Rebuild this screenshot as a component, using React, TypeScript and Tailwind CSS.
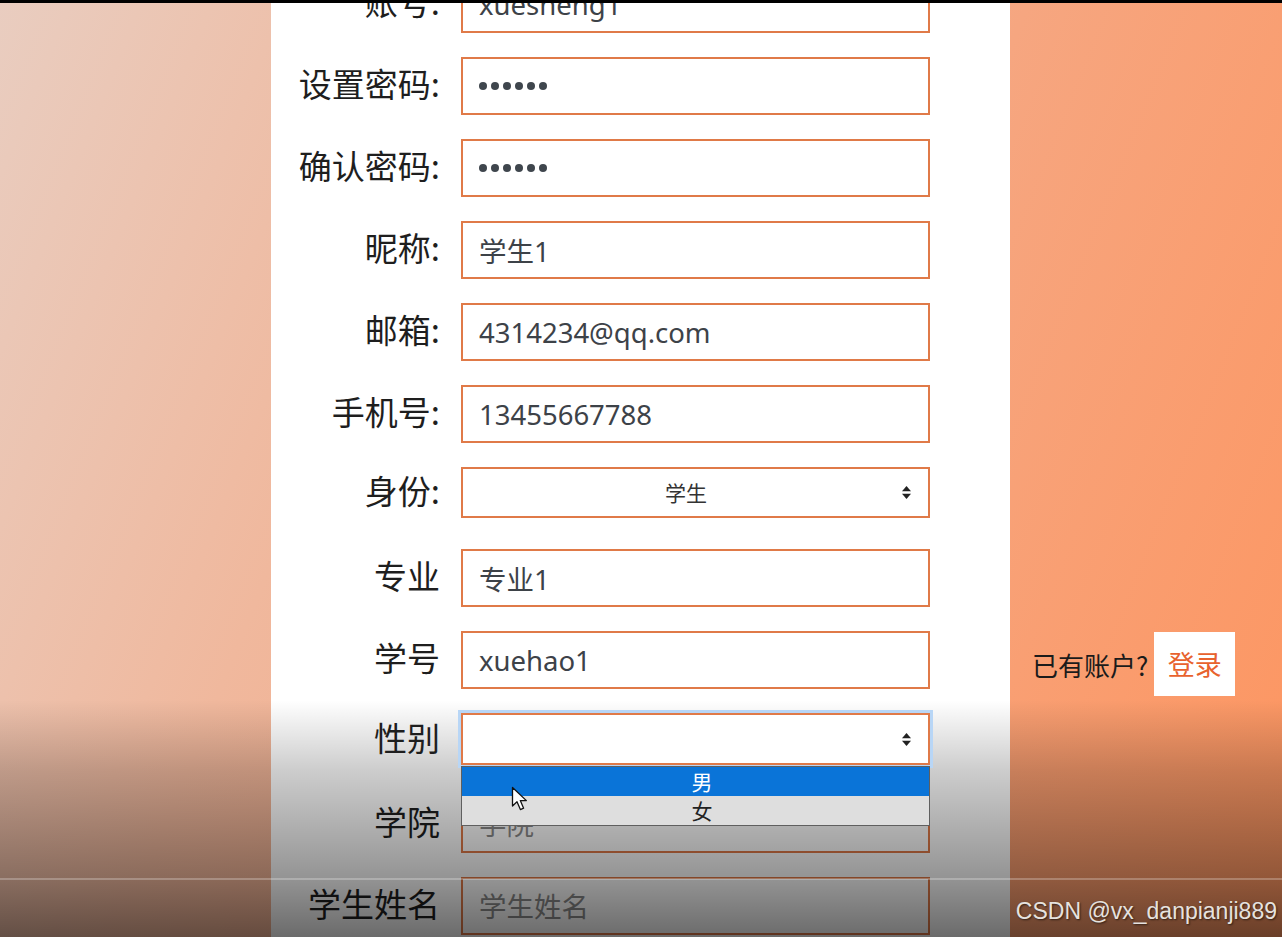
import type { ReactNode } from 'react';

const cjk = '"Noto Sans CJK SC", "Noto Sans", sans-serif';
const field = '"Noto Sans", "Noto Sans CJK SC", sans-serif';

// Bootstrap-ish register form, captured mid-scroll from a video, so the top row is cut off.
function Row({ label, children }: { label: string; children: ReactNode }) {
  return (
    <div className="mb-[24px] flex h-[58px] items-start">
      <div
        className="flex h-[58px] w-[169px] shrink-0 items-center justify-end pb-[5px] text-[33px] leading-none text-[#1e1e1e]"
        style={{ fontFamily: cjk }}
      >
        {label}
      </div>
      <div className="ml-[21px] w-[469px]">{children}</div>
    </div>
  );
}

function TextField({ value, placeholder }: { value?: string; placeholder?: string }) {
  return (
    <input
      readOnly
      value={value ?? ''}
      placeholder={placeholder}
      className="block h-[58px] w-full border-2 border-[#e07a48] bg-white px-[16px] text-[27.5px] text-[#3d4248] outline-none placeholder:text-[#8a8a8a]"
      style={{ fontFamily: field }}
    />
  );
}

function Dots() {
  return (
    <div className="flex h-[58px] w-full items-center gap-[4px] border-2 border-[#e07a48] bg-white px-[16px]">
      {[0, 1, 2, 3, 4, 5].map((i) => (
        <span key={i} className="h-[8px] w-[8px] rounded-full bg-[#3f464d]" />
      ))}
    </div>
  );
}

function Updown() {
  return (
    <svg width="11" height="15" viewBox="0 0 11 15" className="shrink-0">
      <path d="M5.5 1 L10 6.2 L1 6.2 Z" fill="#222" />
      <path d="M5.5 14 L10 8.8 L1 8.8 Z" fill="#222" />
    </svg>
  );
}

function SelectBox({ value, height, focused }: { value: string; height: string; focused?: boolean }) {
  return (
    <div
      className={`flex ${height} w-full items-center border-2 border-[#e07a48] bg-white pl-[8px] pr-[16px] ${
        focused ? 'outline-[3px] outline-[#b8d6f6] outline-solid' : ''
      }`}
    >
      <span className="flex-1 text-center text-[21px] text-[#333]" style={{ fontFamily: cjk }}>
        {value}
      </span>
      <Updown />
    </div>
  );
}

function Pointer() {
  return (
    <svg width="19" height="26" viewBox="0 0 19 26" className="absolute left-[49px] top-[19px]">
      <path
        d="M1.5 1.5 L1.5 20 L6 15.8 L9.4 23.6 L12.6 22.2 L9.3 14.6 L15.4 14.6 Z"
        fill="#fff"
        stroke="#111"
        strokeWidth="1.3"
        strokeLinejoin="round"
      />
    </svg>
  );
}

export default function App() {
  return (
    <div className="relative h-[937px] w-[1282px] overflow-hidden bg-[linear-gradient(112deg,#e9cdc0_0%,#f0b89d_30%,#f6a680_62%,#fd9560_100%)]">
      <div className="flex h-full">
        <div className="w-[271px] shrink-0" />

        <div className="w-[739px] shrink-0 bg-white">
          <div className="-mt-[25px]">
            <Row label="账号:">
              <TextField value="xuesheng1" />
            </Row>
            <Row label="设置密码:">
              <Dots />
            </Row>
            <Row label="确认密码:">
              <Dots />
            </Row>
            <Row label="昵称:">
              <TextField value="学生1" />
            </Row>
            <Row label="邮箱:">
              <TextField value="4314234@qq.com" />
            </Row>
            <Row label="手机号:">
              <TextField value="13455667788" />
            </Row>
            <div className="mb-[24px] flex h-[58px] items-start">
              <div
                className="flex h-[51px] w-[169px] shrink-0 items-center justify-end pb-[4px] text-[33px] leading-none text-[#1e1e1e]"
                style={{ fontFamily: cjk }}
              >
                身份:
              </div>
              <div className="ml-[21px] w-[469px]">
                <SelectBox value="学生" height="h-[51px]" />
              </div>
            </div>
            <Row label="专业">
              <TextField value="专业1" />
            </Row>
            <Row label="学号">
              <TextField value="xuehao1" />
            </Row>
            <div className="relative z-10 mb-[24px] flex h-[58px] items-start">
              <div
                className="flex h-[52px] w-[169px] shrink-0 items-center justify-end pb-[4px] text-[33px] leading-none text-[#1e1e1e]"
                style={{ fontFamily: cjk }}
              >
                性别
              </div>
              <div className="relative ml-[21px] w-[469px]">
                <SelectBox value="" height="h-[52px]" focused />
                <div
                  className="absolute left-0 right-0 top-[53px] border border-[#5f5f5f] bg-[#dedede] pl-[13px] text-center text-[21px] leading-[29px]"
                  style={{ fontFamily: cjk }}
                >
                  <div className="-ml-[13px] bg-[#0a74d8] pl-[13px] text-white">男</div>
                  <div className="text-[#222]">女</div>
                  <Pointer />
                </div>
              </div>
            </div>
            <Row label="学院">
              <TextField placeholder="学院" />
            </Row>
            <Row label="学生姓名">
              <TextField placeholder="学生姓名" />
            </Row>
          </div>
        </div>

        <div className="flex-1 pl-[22px] pt-[632px]">
          <div className="flex items-center">
            <span className="text-[26px] text-[#1b1b1b]" style={{ fontFamily: cjk }}>
              已有账户?
            </span>
            <span
              className="ml-[6px] flex h-[64px] w-[81px] items-center justify-center bg-white text-[27px] text-[#e8622e]"
              style={{ fontFamily: cjk }}
            >
              登录
            </span>
          </div>
        </div>
      </div>

      {/* video frame: top edge, player shade, progress line, watermark */}
      <div className="absolute left-0 right-0 top-0 h-[3px] bg-black" />
      <div className="pointer-events-none absolute bottom-0 left-0 right-0 top-[700px] bg-[linear-gradient(to_bottom,rgba(0,0,0,0)_0%,rgba(0,0,0,0.2)_30%,rgba(0,0,0,0.42)_75%,rgba(0,0,0,0.58)_100%)]" />
      <div className="absolute left-0 right-0 top-[878px] h-[2px] bg-white/25" />
      <div
        className="absolute bottom-[9px] right-[5px] text-[23px] text-[#e6e2df] [text-shadow:1px_1px_2px_rgba(0,0,0,0.6)]"
        style={{ fontFamily: '"Liberation Sans", Arial, sans-serif' }}
      >
        CSDN @vx_danpianji889
      </div>
    </div>
  );
}
